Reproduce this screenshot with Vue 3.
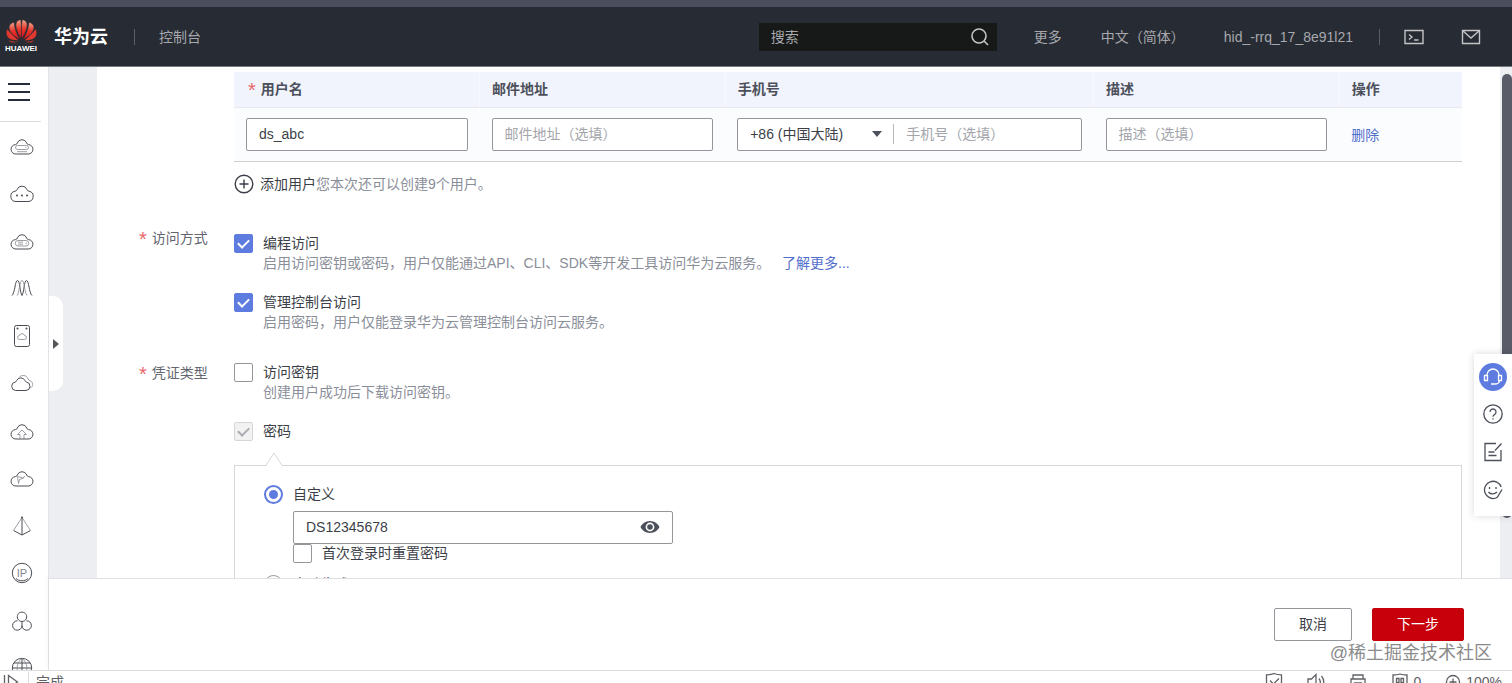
<template>
  <div class="page">
    <!-- 顶部导航 -->
    <div class="top-strip"></div>
    <header class="header">
      <a class="header__logo" href="#" aria-label="HUAWEI">
        <svg class="header__flower" viewBox="0 0 32 24" aria-hidden="true">
          <defs>
            <linearGradient id="petal" x1="0" y1="0" x2="0" y2="1">
              <stop offset="0" stop-color="#f2a58c" />
              <stop offset="0.5" stop-color="#e5342b" />
              <stop offset="1" stop-color="#d8141d" />
            </linearGradient>
          </defs>
          <path
            v-for="(petal, i) in petals"
            :key="i"
            :d="petal"
            :fill="i > 3 ? '#e2382f' : 'url(#petal)'"
          />
        </svg>
        <span class="header__logo-text">HUAWEI</span>
      </a>
      <a class="header__brand" href="#">华为云</a>
      <span class="header__divider"></span>
      <a class="header__console" href="#">控制台</a>

      <div class="header__search">
        <input type="text" placeholder="搜索" aria-label="搜索">
        <button type="button" aria-label="搜索">
          <svg viewBox="0 0 20 20" aria-hidden="true">
            <circle cx="9" cy="9" r="7" />
            <path d="M14 14l4 4" />
          </svg>
        </button>
      </div>

      <nav class="header__nav">
        <a href="#">更多</a>
        <a href="#">中文（简体）</a>
        <a href="#">hid_-rrq_17_8e91l21</a>
      </nav>
      <span class="header__divider header__divider--right"></span>
      <button class="header__tool" type="button" aria-label="CloudShell">
        <svg viewBox="0 0 20 20" aria-hidden="true">
          <path d="M1 3.5h18v13H1zM5 7.5l3 2.5-3 2.5M10 13h4.5" />
        </svg>
      </button>
      <button class="header__tool" type="button" aria-label="消息">
        <svg viewBox="0 0 20 20" aria-hidden="true">
          <path d="M1.500 3.500h17v13h-17zM2 4l8 7 8-7" />
        </svg>
      </button>
    </header>

    <div class="body">
      <!-- 左侧服务栏 -->
      <aside class="sidebar">
        <button class="sidebar__menu" type="button" aria-label="服务列表">
          <svg viewBox="0 0 22 22" aria-hidden="true">
            <path d="M0 3h22M0 11h22M0 19h22" />
          </svg>
        </button>
        <ul class="sidebar__list">
          <li v-for="item in services" :key="item.name">
            <a href="#" :aria-label="item.name">
              <svg viewBox="0 0 24 24" aria-hidden="true">
                <path :d="item.main" />
                <path v-if="item.thin" class="thin" :d="item.thin" />
                <path v-if="item.dots" class="dots" :d="item.dots" />
                <text v-if="item.label" x="12" y="16" text-anchor="middle">{{ item.label }}</text>
              </svg>
            </a>
          </li>
        </ul>
      </aside>

      <div class="main">
        <div class="scroll">
          <button class="handle" type="button" aria-label="展开">
            <svg viewBox="0 0 8 12" aria-hidden="true"><path d="M1 1l6 5-6 5z" /></svg>
          </button>

          <form id="user-form" class="panel" @submit.prevent>
            <div class="content">
              <table class="users">
                <colgroup>
                  <col class="w20"><col class="w20"><col class="w30"><col class="w20"><col class="w10">
                </colgroup>
                <thead>
                  <tr>
                    <th><span class="star">*</span>用户名</th>
                    <th>邮件地址</th>
                    <th>手机号</th>
                    <th>描述</th>
                    <th>操作</th>
                  </tr>
                </thead>
                <tbody>
                  <tr>
                    <td><input v-model="userName" class="field" type="text" aria-label="用户名"></td>
                    <td><input class="field" type="text" placeholder="邮件地址（选填）" aria-label="邮件地址"></td>
                    <td>
                      <div class="field phone">
                        <div class="phone__area">
                          <select aria-label="国家码">
                            <option>+86 (中国大陆)</option>
                          </select>
                          <svg viewBox="0 0 10 6" aria-hidden="true"><path d="M0 0h10L5 6z" /></svg>
                        </div>
                        <input type="text" placeholder="手机号（选填）" aria-label="手机号">
                      </div>
                    </td>
                    <td><input class="field" type="text" placeholder="描述（选填）" aria-label="描述"></td>
                    <td><a class="link" href="#">删除</a></td>
                  </tr>
                </tbody>
              </table>
              <div class="add">
                <button class="add__btn" type="button">
                  <svg viewBox="0 0 20 20" aria-hidden="true">
                    <circle cx="10" cy="10" r="8.8" />
                    <path d="M10 5.500v9M5.500 10h9" />
                  </svg>
                  添加用户
                </button>
                <span class="muted">您本次还可以创建9个用户。</span>
              </div>
            </div>

            <div class="row row--access">
              <div class="row__label"><span class="star">*</span>访问方式</div>
              <div class="row__options">
                <div class="option">
                  <input id="api" v-model="apiAccess" class="check" type="checkbox">
                  <label for="api">编程访问</label>
                  <p class="option__desc">
                    启用访问密钥或密码，用户仅能通过API、CLI、SDK等开发工具访问华为云服务。
                    <a class="link" href="#">了解更多...</a>
                  </p>
                </div>
                <div class="option">
                  <input id="console" v-model="consoleAccess" class="check" type="checkbox">
                  <label for="console">管理控制台访问</label>
                  <p class="option__desc">启用密码，用户仅能登录华为云管理控制台访问云服务。</p>
                </div>
              </div>
            </div>

            <div class="row">
              <div class="row__label"><span class="star">*</span>凭证类型</div>
              <div class="row__options">
                <div class="option">
                  <input id="key" v-model="accessKey" class="check" type="checkbox">
                  <label for="key">访问密钥</label>
                  <p class="option__desc">创建用户成功后下载访问密钥。</p>
                </div>
                <div class="option">
                  <input id="pwd" class="check" type="checkbox" checked disabled>
                  <label for="pwd">密码</label>
                </div>
                <div class="box">
                  <svg class="box__arrow" viewBox="0 0 18 14" aria-hidden="true">
                    <path d="M0.500 14L9 1l8.500 13" />
                  </svg>
                  <div class="option">
                    <input id="custom" v-model="pwdMode" class="radio" type="radio" value="custom">
                    <label for="custom">自定义</label>
                    <div class="custom">
                      <div class="field password">
                        <input v-model="password" :type="showPassword ? 'text' : 'password'" aria-label="密码">
                        <button type="button" aria-label="显示密码" @click="showPassword = !showPassword">
                          <svg viewBox="0 0 20 14" aria-hidden="true">
                            <path d="M10 1C5.500 1 2 3.800 0.500 7 2 10.200 5.500 13 10 13s8-2.800 9.500-6C18 3.800 14.500 1 10 1zm0 10.400A4.400 4.400 0 1 1 10 2.600a4.400 4.400 0 0 1 0 8.800z" />
                            <circle cx="10" cy="7" r="2.800" />
                          </svg>
                        </button>
                      </div>
                      <div class="option">
                        <input id="reset" v-model="resetFirst" class="check" type="checkbox">
                        <label for="reset">首次登录时重置密码</label>
                      </div>
                    </div>
                  </div>
                  <div class="option">
                    <input id="auto" v-model="pwdMode" class="radio" type="radio" value="auto">
                    <label for="auto">自动生成</label>
                  </div>
                </div>
              </div>
            </div>
          </form>

          <div class="scrollbar"><div class="scrollbar__thumb"></div></div>
        </div>

        <footer class="footer">
          <button class="btn" type="button">取消</button>
          <button class="btn btn--primary" type="submit" form="user-form">下一步</button>
        </footer>
      </div>
    </div>

    <!-- 浏览器状态栏 -->
    <div class="status">
      <svg class="status__play" viewBox="0 0 20 20" aria-hidden="true"><path d="M4.500 3v14M8.500 3.500l9 6.500-9 6.500z" /></svg>
      <span class="status__text">完成</span>
      <svg viewBox="0 0 20 20" aria-hidden="true"><path d="M10 1.500c2.500 1 5 1.300 7.500 1.300V10c0 4-3 7-7.500 8.500C5.500 17 2.500 14 2.500 10V2.800C5 2.800 7.500 2.500 10 1.500zM6 8.500l3.500 3.500L15 6.500" /></svg>
      <svg viewBox="0 0 20 20" aria-hidden="true"><path d="M2 7h3.500L10 2.500v15L5.500 13H2zM13 6.500c1.500 2 1.500 5 0 7M15.500 4c3 3.500 3 8.500 0 12" /></svg>
      <svg viewBox="0 0 20 20" aria-hidden="true"><path d="M5 7V3h10v4M5 14H3V7h14v7h-2M6.500 11h7v6h-7z" /></svg>
      <span class="status__group">
        <svg viewBox="0 0 20 20" aria-hidden="true"><path d="M10 2c2.500 1 5 1 7 1v7c0 4-3 6.500-7 8-4-1.500-7-4-7-8V3c2 0 4.500 0 7-1zM6.500 6.500h2.500v4H6.500zM11 6.500h2.500v4H11z" /></svg>
        0
      </span>
      <span class="status__group">
        <svg viewBox="0 0 20 20" aria-hidden="true"><circle cx="10" cy="10" r="6.500" /><path d="M6.500 10h7M10 6.500v7" /></svg>
        100%
      </span>
    </div>

    <!-- 右侧悬浮工具 -->
    <div class="helper">
      <button class="helper__main" type="button" aria-label="客服">
        <svg viewBox="0 0 20 20" aria-hidden="true">
          <path d="M4 9V8a6 6 0 0 1 12 0v1M1.500 8.500h3v5h-3zM15.500 8.500h3v5h-3zM16.500 13.500c0 2.500-2 3.500-5 3.500M8 17h4" />
        </svg>
      </button>
      <button type="button" aria-label="帮助">
        <svg viewBox="0 0 20 20" aria-hidden="true">
          <circle cx="10" cy="10" r="9.200" />
          <path d="M7 8a3 3 0 1 1 4.500 2.600c-1 .6-1.500 1-1.500 2.200M10 14.300v1.200" />
        </svg>
      </button>
      <button type="button" aria-label="反馈">
        <svg viewBox="0 0 20 20" aria-hidden="true">
          <path d="M13 1.500H2v17h16V8M18.500 1.500L12 8.500M5.500 10h6M5.500 13.500h8" />
        </svg>
      </button>
      <button type="button" aria-label="评价">
        <svg viewBox="0 0 20 20" aria-hidden="true">
          <path d="M18.200 7A8.600 8.600 0 1 0 13 18M6.500 7v2M13 7v2M5.500 12c2 2.600 6 2.600 8.500 0M19 9.500l-4.500 7.500-1.500 1" />
        </svg>
      </button>
    </div>

    <div class="watermark">@稀土掘金技术社区</div>
  </div>
</template>

<script setup>
import { ref } from 'vue'

const userName = ref('ds_abc')
const password = ref('DS12345678')
const showPassword = ref(true)
const apiAccess = ref(true)
const consoleAccess = ref(true)
const accessKey = ref(false)
const resetFirst = ref(false)
const pwdMode = ref('custom')

const petals = [
  'M15.500 20C12.500 15 9.500 9 10.300 4.500 10.800 1.800 12.800 .3 15.300 .3 16.300 7 16.200 14 15.500 20z',
  'M16.500 20C19.500 15 22.500 9 21.700 4.500 21.200 1.800 19.200 .3 16.700 .3 15.700 7 15.800 14 16.500 20z',
  'M14.500 21C8 17.500 2.500 12.500 3.200 7.500 3.600 5.200 5.800 3.400 8.300 3 9 10 11.500 16 14.500 21z',
  'M17.500 21C24 17.500 29.500 12.500 28.800 7.500 28.400 5.200 26.200 3.400 23.700 3 23 10 20.500 16 17.500 21z',
  'M13.500 22C8 22 2.500 21 .8 17 -.2 14.500 .1 12 1.300 9.800 5 14.500 9 18.500 13.500 22z',
  'M18.500 22C24 22 29.500 21 31.200 17 32.200 14.500 31.900 12 30.700 9.800 27 14.500 23 18.500 18.500 22z',
  'M13.200 22.800C10 24.300 7.500 24.500 5.500 23.800 4 23.200 3 22.300 2.400 21.200 6 22.500 9.500 23 13.200 22.800z',
  'M18.800 22.800C22 24.300 24.500 24.500 26.500 23.800 28 23.200 29 22.300 29.600 21.200 26 22.500 22.500 23 18.800 22.800z'
]

const cloud = 'M6 20A4.700 4.700 0 0 1 5.500 10.600C6.500 10.400 7 10 7.300 9A5 5 0 0 1 16.700 9C17 10 17.500 10.400 18.500 10.600A4.700 4.700 0 0 1 18 20Z'

const services = [
  { name: '弹性云服务器', main: cloud, thin: 'M7.500 11.500h9a1.800 1.800 0 0 1 0 4h-9a1.800 1.800 0 0 1 0-4zM7 17.700h10M15.500 13.500h1' },
  { name: '云耀云服务器', main: 'M6 20.500A5.200 5.200 0 0 1 5 10.200C6 10 6.700 9.600 7 8.700A5.300 5.300 0 0 1 17 8.700C17.300 9.600 18 10 19 10.200A5.200 5.200 0 0 1 18 20.500Z', dots: 'M7 14.500h.01M12 14.500h.01M17 14.500h.01' },
  { name: '裸金属服务器', main: cloud, thin: 'M8 11.500h8a2.600 2.600 0 0 1 0 5.500h-8a2.600 2.600 0 0 1 0-5.500zM8 13.200h5M8 15.200h5M15.500 14.200h1.500' },
  { name: '弹性伸缩', main: 'M2 19.500C5 17 5 4.500 7.500 4.500S10 17 12 19.500M12 19.500C14 17 14 4.500 16.500 4.500S19 17 22 19.500', thin: 'M7 19.500C9.500 17 9.500 4.500 12 4.500S14.500 17 17 19.500' },
  { name: '云硬盘', main: 'M6.500 1.500h11a2 2 0 0 1 2 2v17a2 2 0 0 1-2 2h-11a2 2 0 0 1-2-2v-17a2 2 0 0 1 2-2z', thin: 'M9.500 15.500a2 2 0 0 1 0-4 2.600 2.600 0 0 1 5 0 2 2 0 0 1 0 4z', dots: 'M7.500 4.500h.01M16.500 4.500h.01' },
  { name: '云备份', main: 'M5.500 19.500A4.300 4.300 0 0 1 5.200 11C6 10.800 6.300 10.500 6.600 9.600A4.600 4.600 0 0 1 15 9.600C15.300 10.500 15.800 10.800 16.500 11A4.300 4.300 0 0 1 16 19.500Z', thin: 'M9 6.500C11 3.500 17 3.800 18 8 18.300 9 19 9.300 20 9.600 23.500 11 23.500 16 20 17' },
  { name: '对象存储', main: cloud, thin: 'M10 20v-4.500H7.500L12 11l4.500 4.500H14V20' },
  { name: '弹性文件', main: cloud, thin: 'M7.500 10.500l6 1.500-4 1.500-1 4zM13.500 12l1-2' },
  { name: '虚拟私有云', main: 'M12 3v18M3.500 16.500L12 21l8.500-4.500', thin: 'M12 3.500L3.500 16.500M12 3.500l8.500 13', dots: 'M12 3.500h.01' },
  { name: '弹性公网IP', main: 'M12 2.300a9.700 9.700 0 1 0 0 19.400 9.700 9.700 0 0 0 0-19.400zM6 17.500c3 3 9 3 12 0', label: 'IP' },
  { name: '区块链', main: 'M12 12.500a4.700 4.700 0 1 1 .01 0M12 16.500a4.700 4.700 0 1 1-4.500-4.700M12 16.500a4.700 4.700 0 1 0 4.500-4.700M12 12.500v4' },
  { name: '域名解析', main: 'M12 2.300a9.700 9.700 0 1 0 0 19.400 9.700 9.700 0 0 0 0-19.400zM2.300 12h19.400M12 2.300v19.400M4 7h16', thin: 'M12 2.300C5.500 7 5.500 17 12 21.700M12 2.300C18.500 7 18.500 17 12 21.700' }
]
</script>

<style>
body {
  margin: 0;
  overflow: hidden;
}
</style>

<style scoped>
.page {
  position: relative;
  display: flex;
  flex-direction: column;
  height: 100vh;
  overflow: hidden;

  background: #fff;
  color: #3c3f48;
  font-family: "Liberation Sans", "Noto Sans CJK SC", sans-serif;
  font-size: 14px;
  line-height: 20px;
}

a {
  color: inherit;
  text-decoration: none;
}

button,
input,
select {
  margin: 0;
  padding: 0;
  border: none;
  outline: none;
  background: transparent;
  color: inherit;
  font: inherit;
}

button {
  cursor: pointer;
}

svg {
  display: block;
  flex: none;
  fill: none;
  stroke: currentColor;
}

input::placeholder {
  color: #a3a5ab;
  opacity: 1;
}

/* ==================== Header ==================== */

.top-strip {
  flex: none;
  height: 7px;
  background: #4a4d5b;
}

.header {
  display: flex;
  flex: none;
  align-items: center;
  height: 59px;
  padding: 0 31px 0 5px;
  border-bottom: 1px solid #77787e;

  background: #272b33;
  color: #a6a8ad;
}

.header__logo {
  display: flex;
  flex-direction: column;
  align-items: center;
  width: 32px;
  color: #fff;
}

.header__flower {
  width: 31px;
  height: 24px;
  stroke: #272b33;
  stroke-width: 0.6;
}

.header__logo-text {
  font-size: 8px;
  font-weight: 700;
  line-height: 11px;
}

.header__brand {
  margin-left: 17px;
  color: #fff;
  font-size: 18px;
  font-weight: 700;
}

.header__divider {
  width: 1px;
  height: 16px;
  margin: 0 24px 0 26px;
  background: #5b5e66;
}

.header__console {
  margin-right: auto;
}

.header__search {
  display: flex;
  align-items: center;
  width: 238px;
  height: 28px;
  margin-right: 37px;
  background: #171918;
}

.header__search input {
  flex: 1;
  min-width: 0;
  padding-left: 12px;
}

.header__search input::placeholder {
  color: #a6a8ad;
}

.header__search svg {
  width: 20px;
  height: 20px;
  margin-right: 7px;
  stroke: #c3c4c6;
  stroke-width: 1.6;
}

.header__nav {
  display: flex;
  gap: 39px;
}

.header__divider--right {
  margin: 0 24px 0 26px;
}

.header__tool svg {
  width: 20px;
  height: 20px;
  color: #c3c4c6;
  stroke-width: 1.4;
}

.header__tool + .header__tool {
  margin-left: 37px;
}

/* ==================== Sidebar ==================== */

.body {
  display: flex;
  flex: 1;
  min-height: 0;
}

.sidebar {
  display: flex;
  flex: none;
  flex-direction: column;
  width: 48px;
  overflow: hidden;
  border-right: 1px solid #e3e4e8;
}

.sidebar__menu {
  display: flex;
  flex: none;
  align-items: center;
  width: 41px;
  height: 55px;
  padding: 0 0 5px 8px;
  border-bottom: 1px solid #dcdde0;
  color: #252b3a;
}

.sidebar__menu svg {
  width: 22px;
  height: 22px;
  stroke-width: 2;
}

.sidebar__list {
  display: flex;
  flex: 1;
  flex-direction: column;
  justify-content: space-between;
  margin: 0 0 -10px;
  padding: 12px 0 0 10px;
  list-style: none;
}

.sidebar__list svg {
  width: 24px;
  height: 24px;
  color: #4b4d54;
}

.sidebar__list .thin {
  stroke: #85878c;
  stroke-width: 0.8;
}

.sidebar__list .dots {
  stroke-linecap: round;
  stroke-width: 2;
}

.sidebar__list text {
  fill: #85878c;
  stroke: none;
  font-size: 11px;
}

/* ==================== Form ==================== */

.main {
  display: flex;
  flex: 1;
  flex-direction: column;
  min-width: 0;
}

.scroll {
  position: relative;
  display: flex;
  flex: 1;
  min-height: 0;
  overflow: hidden;
  background: #edeef2;
}

.handle {
  position: absolute;
  top: 229px;
  left: 0;
  width: 14px;
  height: 95px;
  padding-left: 3px;
  border-radius: 0 10px 10px 0;
  background: #fff;
}

.handle svg {
  width: 8px;
  height: 12px;
  fill: #54565c;
  stroke: none;
}

.panel {
  flex: 1;
  min-width: 0;
  margin-left: 48px;
  padding: 5px 38px 0 41px;
  background: #fff;
}

.content {
  margin-left: 96px;
}

.users {
  width: 100%;
  table-layout: fixed;
  border-collapse: collapse;
}

.w10 {
  width: 10%;
}

.w20 {
  width: 20%;
}

.w30 {
  width: 30%;
}

.users th {
  padding: 7px 12px 8px;
  border-bottom: 1px solid #e6e9ef;
  background: #f1f4fd;
  color: #4c505b;
  font-weight: 700;
  text-align: left;
}

.users th + th {
  border-left: 1px solid #f7f9fe;
}

.users td {
  padding: 10px 12px;
  border-bottom: 1px solid #cdcfd3;
  background: #fbfcfe;
}

.star {
  margin-right: 5px;
  color: #e8686b;
  font-size: 20px;
  font-weight: 400;
  line-height: 0;
  vertical-align: -3px;
}

.users .star {
  margin-left: 2px;
}

.field {
  display: flex;
  box-sizing: border-box;
  width: 100%;
  height: 33px;
  padding: 0 12px 2px;
  border: 1px solid #94969c;
  border-radius: 2px;
  background: #fff;
}

.phone {
  align-items: center;
  padding: 0 0 2px;
}

.phone__area {
  display: grid;
  flex: none;
  align-items: center;
  width: 155px;
  border-right: 1px solid #b5b7bb;
}

.phone__area select {
  grid-area: 1 / 1;
  height: 20px;
  padding-left: 12px;
  appearance: none;
}

.phone__area svg {
  grid-area: 1 / 1;
  justify-self: end;
  width: 10px;
  height: 6px;
  margin-right: 11px;
  fill: #4c505b;
  stroke: none;
  pointer-events: none;
}

.phone input {
  flex: 1;
  min-width: 0;
  padding-left: 12px;
}

.link {
  color: #526ecc;
}

.muted {
  color: #8a8e99;
}

.add {
  display: flex;
  align-items: center;
  margin-top: 12px;
}

.add__btn {
  display: flex;
  gap: 6px;
  align-items: center;
}

.add__btn svg {
  width: 20px;
  height: 20px;
  stroke-width: 1.4;
}

.row {
  display: flex;
  margin-top: 31px;
}

.row--access {
  margin-top: 34px;
}

.row__label {
  flex: none;
  box-sizing: border-box;
  width: 96px;
  padding-left: 1px;
  color: #63666f;
}

.row__options {
  flex: 1;
  min-width: 0;
}

.row--access .row__options {
  padding-top: 6px;
}

.option {
  display: grid;
  grid-template-columns: 19px 1fr;
  column-gap: 10px;
}

.option label {
  line-height: 18px;
}

.option + .option {
  margin-top: 20px;
}

.option__desc {
  grid-column: 2;
  margin: 0;
  color: #8a8e99;
}

.option__desc .link {
  margin-left: 8px;
}

.check,
.radio {
  display: grid;
  box-sizing: border-box;
  place-content: center;
  width: 19px;
  height: 19px;
  border: 1px solid #94969c;
  border-radius: 2px;
  background: #fff;
  appearance: none;
}

.check:checked {
  border-color: #5e7ce0;
  background: #5e7ce0;
  color: #fff;
}

.check:checked::after {
  width: 9px;
  height: 5px;
  margin-bottom: 3px;
  border-bottom: 2px solid;
  border-left: 2px solid;
  transform: rotate(-45deg);
  content: "";
}

.check:disabled {
  border-color: #d5d6d9;
  background: #f2f2f3;
  color: #a9abb0;
}

.radio {
  border-radius: 50%;
}

.radio:checked {
  border: 2px solid #5e7ce0;
}

.radio:checked::after {
  width: 9px;
  height: 9px;
  border-radius: 50%;
  background: #5e7ce0;
  content: "";
}

.box {
  position: relative;
  margin-top: 24px;
  padding: 19px 29px;
  border: 1px solid #d5d7da;
}

.box__arrow {
  position: absolute;
  top: -14px;
  left: 30px;
  width: 18px;
  height: 14px;
  background: linear-gradient(#fff, #fff) bottom / 16px 1px no-repeat;
  stroke: #d5d7da;
}

.box > .option + .option {
  margin-top: 12px;
}

.custom {
  grid-column: 2;
  margin-top: 7px;
}

.password {
  width: 380px;
  max-width: 100%;
}

.password input {
  flex: 1;
  min-width: 0;
}

.password svg {
  width: 20px;
  height: 14px;
  fill: #4c505b;
  stroke: none;
}

.scrollbar {
  flex: none;
  width: 10px;
  padding: 7px 0 0 2px;
}

.scrollbar__thumb {
  height: 88%;
  border-radius: 5px;
  background: #595b69;
}

/* ==================== Footer ==================== */

.footer {
  display: flex;
  flex: none;
  gap: 20px;
  justify-content: flex-end;
  padding: 29px 48px;
  border-top: 1px solid #dfe1e4;
  background: #fff;
  box-shadow: 0 -2px 6px rgba(0, 0, 0, 0.06);
}

.btn {
  height: 33px;
  padding: 0 24px;
  border: 1px solid #94969c;
  border-radius: 2px;
  line-height: 31px;
}

.btn--primary {
  border-color: #c7000b;
  background: #c7000b;
  color: #fff;
}

.status {
  display: flex;
  flex: none;
  gap: 22px;
  box-sizing: border-box;
  height: 13px;
  padding: 1px 10px 0 0;
  overflow: hidden;
  border-top: 1px solid #dcdde0;
  color: #5f6166;
}

.status svg {
  width: 20px;
  height: 20px;
  stroke-width: 1.3;
}

.status .status__play {
  padding-right: 8px;
  border-right: 1px solid #dcdde0;
}

.status__text {
  margin: 0 auto 0 -15px;
}

.status__group {
  display: flex;
  gap: 3px;
}

/* ==================== Floating ==================== */

.helper {
  position: absolute;
  top: 354px;
  right: 0;
  display: flex;
  flex-direction: column;
  gap: 18px;
  align-items: center;
  box-sizing: border-box;
  width: 38px;
  padding: 9px 0 16px;
  background: #fff;
  box-shadow: 0 0 8px rgba(0, 0, 0, 0.15);
  color: #4c505b;
}

.helper svg {
  width: 20px;
  height: 20px;
  stroke-width: 1.3;
}

.helper__main {
  display: grid;
  place-content: center;
  width: 28px;
  height: 28px;
  margin-bottom: -5px;
  border-radius: 50%;
  background: #5e7ce0;
  color: #fff;
}

.watermark {
  position: absolute;
  right: 20px;
  bottom: 18px;
  color: #8b8b8b;
  font-size: 18px;
  line-height: 24px;
  text-shadow: 0 0 1px #fff;
}
</style>
